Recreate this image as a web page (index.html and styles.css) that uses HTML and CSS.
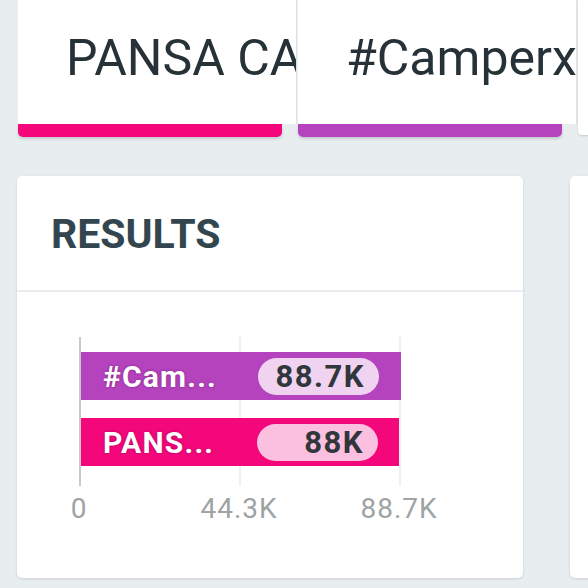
FILE: index.html
```html
<!DOCTYPE html>
<html>
<head>
<meta charset="utf-8">
<link rel="stylesheet" href="styles.css">
</head>
<body>
<div class="page">
  <div class="tabs">
    <div class="tab">
      <div class="tab-body"><span class="tab-title">PANSA CAMPERX</span></div>
      <div class="tab-bar pink"></div>
    </div>
    <div class="tab">
      <div class="tab-body"><span class="tab-title">#Camperx</span></div>
      <div class="tab-bar purple"></div>
    </div>
    <div class="tab">
      <div class="tab-body short"></div>
    </div>
  </div>
  <div class="cards">
    <div class="card">
      <div class="card-head">RESULTS</div>
      <div class="card-body">
        <div class="chart">
          <div class="plot">
            <div class="grid g1"></div>
            <div class="grid g2"></div>
            <div class="bar purple" style="width:320px">
              <span class="bar-label">#Cam...</span>
              <span class="pill pill-purple">88.7K</span>
            </div>
            <div class="bar pink" style="width:318px">
              <span class="bar-label">PANS...</span>
              <span class="pill pill-pink">88K</span>
            </div>
          </div>
          <div class="axis">
            <span class="tick t0">0</span>
            <span class="tick t1">44.3K</span>
            <span class="tick t2">88.7K</span>
          </div>
        </div>
      </div>
    </div>
    <div class="card card-next"></div>
  </div>
</div>
</body>
</html>
```
FILE: styles.css
```css
html, body {
  margin: 0;
  padding: 0;
  background: #e8edf0;
  font-family: Roboto, "Liberation Sans", sans-serif;
  overflow: hidden;
}
.page {
  width: 588px;
  height: 588px;
  overflow: hidden;
}
.tabs {
  display: flex;
  padding-left: 18px;
  gap: 2px;
  height: 137px;
}
.tab {
  width: 278px;
  flex: none;
  display: flex;
  flex-direction: column;
}
.tab-body {
  background: #fff;
  height: 124px;
  overflow: hidden;
  white-space: nowrap;
  box-sizing: border-box;
  padding-top: 28px;
  padding-left: 48px;
  box-shadow: 1px 0 0 #dfe4e7;
}
.tab-body.short {
  height: 135px;
  border-radius: 0 0 4px 4px;
  box-shadow: 0 1px 2px rgba(0,0,0,0.15);
}
.tab-title {
  font-size: 50px;
  line-height: 60px;
  color: #263238;
}
.tab-bar {
  width: 264px;
  height: 13px;
  border-radius: 0 0 5px 5px;
  box-shadow: 0 2px 3px rgba(0,0,0,0.15);
}
.pink { background: #f5077c; }
.purple { background: #b543be; }
.cards {
  display: flex;
  gap: 47px;
  padding-left: 17px;
  margin-top: 39px;
}
.card {
  width: 506px;
  height: 402px;
  flex: none;
  background: #fff;
  border-radius: 5px;
  box-shadow: 0 1px 3px rgba(0,0,0,0.12);
}
.card-head {
  padding: 34px 33px 32px 34px;
  font-size: 41px;
  line-height: 48px;
  font-weight: 700;
  color: #334650;
  border-bottom: 2px solid #e9edef;
}
.card-body {
  padding: 45px 0 0 62px;
}
.chart {
  width: 340px;
}
.plot {
  position: relative;
  width: 322px;
  border-left: 2px solid #c9c9c9;
  padding: 15px 0 20px;
  display: flex;
  flex-direction: column;
  gap: 18px;
}
.grid {
  position: absolute;
  top: 0;
  bottom: 0;
  width: 2px;
  background: #efefef;
}
.g1 { left: 158px; }
.g2 { left: 318px; }
.bar {
  position: relative;
  height: 48px;
  display: flex;
  align-items: center;
  justify-content: space-between;
  box-sizing: border-box;
  padding: 0 22px 0 22px;
}
.bar-label {
  color: #fff;
  font-size: 30px;
  font-weight: 700;
  text-shadow: 0 0 3px rgba(80,0,60,0.45);
  letter-spacing: 1.2px;
}
.pill {
  width: 121px;
  height: 37px;
  border-radius: 19px;
  box-sizing: border-box;
  padding-right: 14px;
  text-align: right;
  font-size: 31px;
  line-height: 37px;
  font-weight: 700;
  color: #30363a;
  letter-spacing: 1.5px;
}
.pill-purple { background: #efd3f0; }
.pill-pink { background: #fbbfe0; margin-right: -1px; }
.axis {
  position: relative;
  height: 40px;
  margin-top: 6px;
}
.tick {
  position: absolute;
  top: 0;
  font-size: 28px;
  line-height: 34px;
  color: #9ea3a3;
  letter-spacing: 1px;
  transform: translateX(-50%);
}
.t0 { left: 0px; }
.t1 { left: 160px; }
.t2 { left: 320px; }
.card-next {
  width: 300px;
}
```
